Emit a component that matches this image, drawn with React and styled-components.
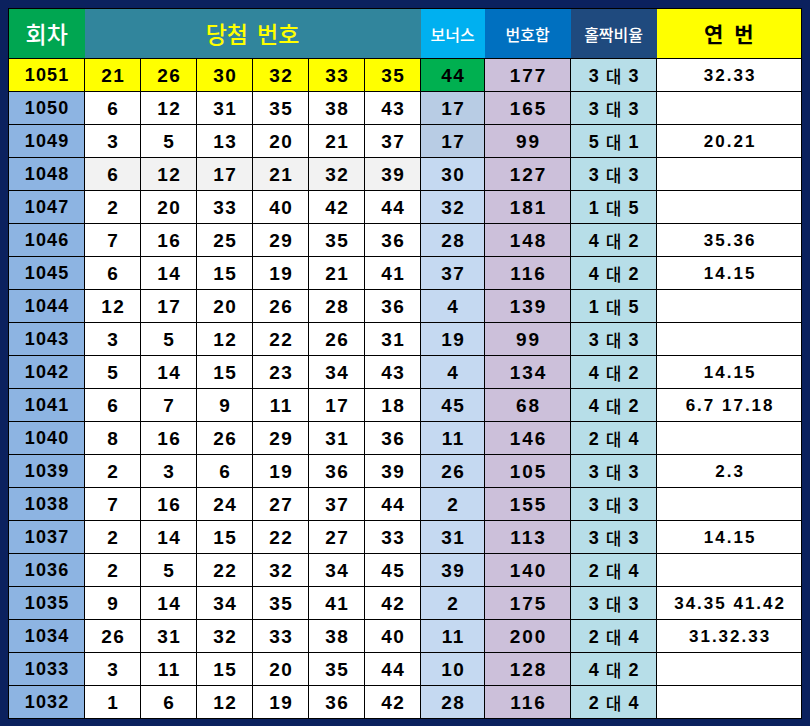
import React from 'react';
import styled, { createGlobalStyle } from 'styled-components';

const GlobalStyle = createGlobalStyle`
  html, body {
    margin: 0;
    padding: 0;
    background: #0b215e;
  }
`;

const Frame = styled.div`
  width: 810px;
  height: 726px;
  box-sizing: border-box;
  padding: 8px 9px 8px 8px;
  background: #0b215e;
`;

const Table = styled.table`
  width: 793px;
  table-layout: fixed;
  border-collapse: collapse;
  border: 1px solid #000;
  font-family: "Liberation Sans", "Noto Sans CJK KR", sans-serif;
  font-weight: bold;
  color: #000;
`;

const HeadRow = styled.tr`
  height: 50px;
`;

const HeadCell = styled.th`
  background: ${(p) => p.$bg};
  color: ${(p) => p.$color || '#fff'};
  font-family: "Noto Sans CJK KR", sans-serif;
  font-size: ${(p) => p.$size || 16}px;
  font-weight: ${(p) => (p.$light ? 500 : 700)};
  word-spacing: ${(p) => p.$wordSpacing || 0}px;
  line-height: 1;
  border-bottom: 1px solid #000;
  padding: 0;
  text-align: center;
  vertical-align: middle;
`;

const Row = styled.tr`
  height: 33px;
`;

const Cell = styled.td`
  background: ${(p) => p.$bg || '#fff'};
  border: 1px solid #000;
  padding: 0 0 0 ${(p) => p.$spacing ?? 1.5}px;
  text-align: center;
  vertical-align: middle;
  font-size: ${(p) => p.$size || 19}px;
  letter-spacing: ${(p) => p.$spacing ?? 1.5}px;
  line-height: 1;
  white-space: nowrap;
`;

const Ratio = styled.span`
  display: inline-flex;
  align-items: center;
  gap: 7px;
  font-size: 18px;
  letter-spacing: 0;
  line-height: 1;

  b {
    font-family: "Noto Sans CJK KR", sans-serif;
    font-weight: 500;
    font-size: 17px;
    line-height: 1;
  }
`;

const COLS = [76, 56, 56, 56, 56, 56, 56, 64, 86, 86, 145];

const ROWS = [
  [1051, [21, 26, 30, 32, 33, 35], 44, 177, [3, 3], '32.33'],
  [1050, [6, 12, 31, 35, 38, 43], 17, 165, [3, 3], ''],
  [1049, [3, 5, 13, 20, 21, 37], 17, 99, [5, 1], '20.21'],
  [1048, [6, 12, 17, 21, 32, 39], 30, 127, [3, 3], ''],
  [1047, [2, 20, 33, 40, 42, 44], 32, 181, [1, 5], ''],
  [1046, [7, 16, 25, 29, 35, 36], 28, 148, [4, 2], '35.36'],
  [1045, [6, 14, 15, 19, 21, 41], 37, 116, [4, 2], '14.15'],
  [1044, [12, 17, 20, 26, 28, 36], 4, 139, [1, 5], ''],
  [1043, [3, 5, 12, 22, 26, 31], 19, 99, [3, 3], ''],
  [1042, [5, 14, 15, 23, 34, 43], 4, 134, [4, 2], '14.15'],
  [1041, [6, 7, 9, 11, 17, 18], 45, 68, [4, 2], '6.7 17.18'],
  [1040, [8, 16, 26, 29, 31, 36], 11, 146, [2, 4], ''],
  [1039, [2, 3, 6, 19, 36, 39], 26, 105, [3, 3], '2.3'],
  [1038, [7, 16, 24, 27, 37, 44], 2, 155, [3, 3], ''],
  [1037, [2, 14, 15, 22, 27, 33], 31, 113, [3, 3], '14.15'],
  [1036, [2, 5, 22, 32, 34, 45], 39, 140, [2, 4], ''],
  [1035, [9, 14, 34, 35, 41, 42], 2, 175, [3, 3], '34.35 41.42'],
  [1034, [26, 31, 32, 33, 38, 40], 11, 200, [2, 4], '31.32.33'],
  [1033, [3, 11, 15, 20, 35, 44], 10, 128, [4, 2], ''],
  [1032, [1, 6, 12, 19, 36, 42], 28, 116, [2, 4], ''],
];

const roundBg = (i) => (i === 0 ? '#ffff00' : '#8db4e2');
const numBg = (i) => (i === 0 ? '#ffff00' : i === 3 ? '#f2f2f2' : '#fff');
const bonusBg = (i) => (i === 0 ? '#00b050' : i < 3 ? '#b8cce4' : '#c5d9f1');

export default function App() {
  return (
    <Frame>
      <GlobalStyle />
      <Table>
        <colgroup>
          {COLS.map((w, i) => (
            <col key={i} style={{ width: w }} />
          ))}
        </colgroup>
        <thead>
          <HeadRow>
            <HeadCell $bg="#00a651" $size={23} $light>회차</HeadCell>
            <HeadCell colSpan={6} $bg="#31859c" $color="#ffff00" $size={23} $wordSpacing={4} $light>
              당첨 번호
            </HeadCell>
            <HeadCell $bg="#00b0f0" $light>보너스</HeadCell>
            <HeadCell $bg="#0070c0" $light>번호합</HeadCell>
            <HeadCell $bg="#1f4a7e" $light>홀짝비율</HeadCell>
            <HeadCell $bg="#ffff00" $color="#000" $size={21} $wordSpacing={6}>연 번</HeadCell>
          </HeadRow>
        </thead>
        <tbody>
          {ROWS.map(([round, nums, bonus, sum, [odd, even], seq], i) => (
            <Row key={round}>
              <Cell $bg={roundBg(i)} $size={18} $spacing={1.2}>{round}</Cell>
              {nums.map((n, j) => (
                <Cell key={j} $bg={numBg(i)}>{n}</Cell>
              ))}
              <Cell $bg={bonusBg(i)}>{bonus}</Cell>
              <Cell $bg="#ccc0da" $spacing={2}>{sum}</Cell>
              <Cell $bg="#b7dee8" $spacing={0}>
                <Ratio>
                  <span>{odd}</span>
                  <b>대</b>
                  <span>{even}</span>
                </Ratio>
              </Cell>
              <Cell $size={17} $spacing={2}>{seq}</Cell>
            </Row>
          ))}
        </tbody>
      </Table>
    </Frame>
  );
}
